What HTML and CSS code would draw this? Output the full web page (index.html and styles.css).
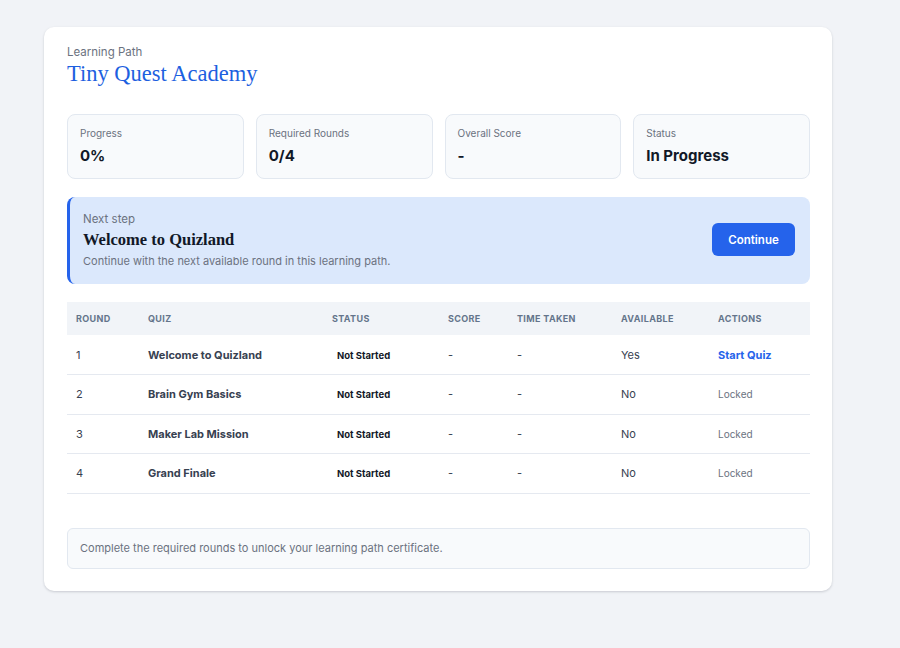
FILE: index.html
```html
<!DOCTYPE html>
<html>
<head>
<meta charset="utf-8">
<link rel="stylesheet" href="styles.css">
</head>
<body>
<div class="card">
  <div class="eyebrow">Learning Path</div>
  <h1 class="title">Tiny Quest Academy</h1>

  <div class="stats">
    <div class="stat"><div class="stat-label">Progress</div><div class="stat-value">0%</div></div>
    <div class="stat"><div class="stat-label">Required Rounds</div><div class="stat-value">0/4</div></div>
    <div class="stat"><div class="stat-label">Overall Score</div><div class="stat-value">-</div></div>
    <div class="stat"><div class="stat-label">Status</div><div class="stat-value">In Progress</div></div>
  </div>

  <div class="next">
    <div class="next-text">
      <div class="next-label">Next step</div>
      <div class="next-title">Welcome to Quizland</div>
      <div class="next-desc">Continue with the next available round in this learning path.</div>
    </div>
    <button class="btn">Continue</button>
  </div>

  <table class="rounds">
    <thead>
      <tr>
        <th class="c-round">Round</th>
        <th class="c-quiz">Quiz</th>
        <th class="c-status">Status</th>
        <th class="c-score">Score</th>
        <th class="c-time">Time Taken</th>
        <th class="c-avail">Available</th>
        <th class="c-act">Actions</th>
      </tr>
    </thead>
    <tbody>
      <tr>
        <td>1</td><td class="quiz">Welcome to Quizland</td><td><span class="badge">Not Started</span></td><td>-</td><td>-</td><td class="avail">Yes</td><td><a class="start">Start Quiz</a></td>
      </tr>
      <tr>
        <td>2</td><td class="quiz">Brain Gym Basics</td><td><span class="badge">Not Started</span></td><td>-</td><td>-</td><td class="avail">No</td><td class="locked">Locked</td>
      </tr>
      <tr>
        <td>3</td><td class="quiz">Maker Lab Mission</td><td><span class="badge">Not Started</span></td><td>-</td><td>-</td><td class="avail">No</td><td class="locked">Locked</td>
      </tr>
      <tr>
        <td>4</td><td class="quiz">Grand Finale</td><td><span class="badge">Not Started</span></td><td>-</td><td>-</td><td class="avail">No</td><td class="locked">Locked</td>
      </tr>
    </tbody>
  </table>

  <div class="note">Complete the required rounds to unlock your learning path certificate.</div>
</div>
</body>
</html>
```

FILE: styles.css
```css
html, body {
  margin: 0;
  padding: 0;
}
body {
  background: #f1f3f7;
  font-family: Inter, "Liberation Sans", sans-serif;
  color: #1f2937;
  padding: 27px 0 0 44px;
  height: 648px;
  box-sizing: border-box;
}
.card {
  width: 788px;
  box-sizing: border-box;
  background: #fff;
  border-radius: 10px;
  box-shadow: 0 1px 3px rgba(15, 23, 42, 0.12), 0 1px 2px rgba(15, 23, 42, 0.06);
  padding: 17px 22px 22px 23px;
}
.eyebrow {
  font-size: 11.5px;
  color: #6b7280;
  line-height: 17px;
}
.title {
  margin: 0;
  font-family: "Liberation Serif", "DejaVu Serif", serif;
  font-weight: 400;
  font-size: 22.5px;
  line-height: 25px;
  color: #1d5fe0;
}
.stats {
  display: grid;
  grid-template-columns: repeat(4, 1fr);
  gap: 12px;
  margin-top: 28px;
}
.stat {
  background: #f8fafc;
  border: 1px solid #e2e8f0;
  border-radius: 8px;
  height: 65px;
  box-sizing: border-box;
  padding: 11px 12px 0 12px;
}
.stat-label {
  font-size: 10px;
  color: #6b7280;
  line-height: 14px;
}
.stat-value {
  font-size: 15px;
  font-weight: 700;
  color: #111827;
  margin-top: 6px;
  line-height: 20px;
}
.next {
  margin-top: 18px;
  background: #dbe8fc;
  border-left: 3px solid #2563eb;
  border-radius: 8px;
  height: 87px;
  box-sizing: border-box;
  display: flex;
  align-items: center;
  justify-content: space-between;
  padding: 0 15px 0 13px;
}
.next-label {
  font-size: 11.5px;
  color: #6b7280;
  line-height: 16px;
}
.next-title {
  font-family: "Liberation Serif", "DejaVu Serif", serif;
  font-weight: 700;
  font-size: 16.5px;
  line-height: 22px;
  color: #111827;
  margin-top: 2px;
}
.next-desc {
  font-size: 11px;
  color: #6b7280;
  line-height: 18px;
  margin-top: 1px;
}
.btn {
  background: #2563eb;
  color: #fff;
  border: 0;
  border-radius: 6px;
  width: 83px;
  height: 33px;
  font-family: Inter, "Liberation Sans", sans-serif;
  font-size: 11.5px;
  font-weight: 600;
  margin-top: -2px;
}
.rounds {
  margin-top: 18px;
  width: 100%;
  border-collapse: collapse;
  font-size: 11px;
}
.rounds th {
  background: #f1f4f8;
  text-align: left;
  text-transform: uppercase;
  font-size: 9px;
  font-weight: 700;
  letter-spacing: 0.04em;
  color: #64748b;
  height: 33px;
  padding: 0 9px;
}
.rounds td {
  height: 39.5px;
  box-sizing: border-box;
  padding: 0 9px;
  border-bottom: 1px solid #e5e9f0;
  color: #374151;
}
.c-round { width: 54px; }
.c-quiz { width: 166px; }
.c-status { width: 98px; }
.c-score { width: 51px; }
.c-time { width: 86px; }
.c-avail { width: 79px; }
.quiz {
  font-weight: 700;
  color: #1f2937;
}
.badge {
  font-size: 9.5px;
  font-weight: 700;
  color: #111827;
  padding: 0 5px;
}
.avail { color: #1f2937; }
.start {
  color: #2563eb;
  font-weight: 700;
}
.locked {
  font-size: 10px;
  color: #6b7280 !important;
}
.note {
  margin-top: 34px;
  background: #f8fafc;
  border: 1px solid #e2e8f0;
  border-radius: 6px;
  height: 41px;
  box-sizing: border-box;
  display: flex;
  align-items: center;
  padding: 0 12px;
  font-size: 11px;
  color: #6b7280;
}
```
